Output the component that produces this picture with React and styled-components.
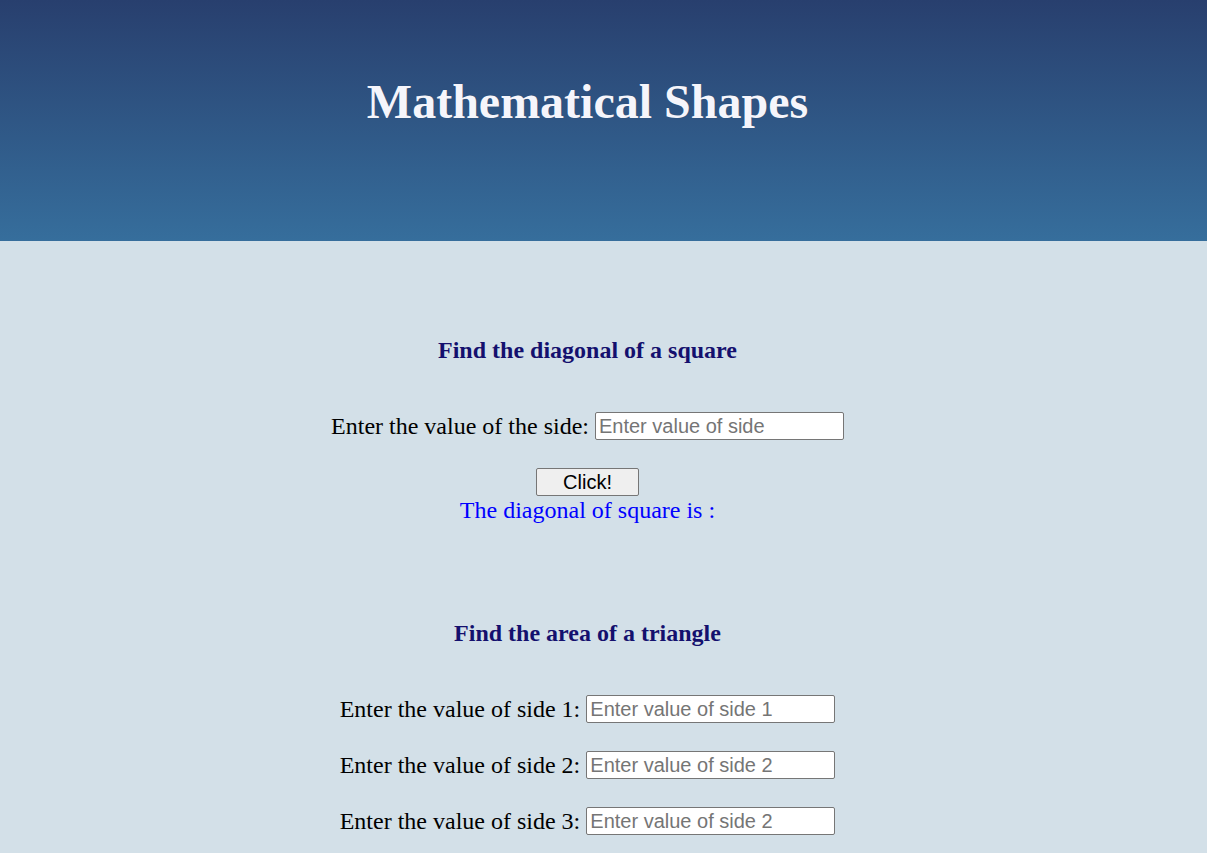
import React from "react";
import styled, { createGlobalStyle } from "styled-components";

const Global = createGlobalStyle`
  html, body { margin: 0; padding: 0; }
  body { background: #d3e0e8; font-family: "Liberation Serif", "Times New Roman", serif; }
`;

const Header = styled.header`
  height: 241px;
  background: linear-gradient(to bottom, #283f6e, #366e9c);
  display: flex;
  justify-content: center;
  align-items: flex-start;
  padding-right: 32px;
`;

const Title = styled.h1`
  margin: 0;
  padding-top: 74px;
  font-size: 48px;
  line-height: 56px;
  font-weight: bold;
  color: #f5f5fb;
  text-shadow: 0 0 1px rgba(0,0,0,0.2);
`;

const Main = styled.main`
  display: flex;
  flex-direction: column;
  align-items: center;
  padding-right: 32px;
`;

const Section = styled.section`
  display: flex;
  flex-direction: column;
  align-items: center;
  padding-top: ${p => p.$top}px;
`;

const Heading = styled.h3`
  margin: 0 0 ${p => p.$gap}px;
  font-size: 24px;
  line-height: 24px;
  font-weight: bold;
  color: #14106e;
`;

const Row = styled.div`
  display: flex;
  align-items: center;
  gap: 6px;
  height: 28px;
  margin-bottom: ${p => p.$gap}px;
  font-size: 24px;
  color: #000;
`;

const Input = styled.input`
  width: 249px;
  height: 28px;
  box-sizing: border-box;
  border: 1px solid #767676;
  border-radius: 2px;
  padding: 0 3px;
  font-family: "Liberation Sans", Arial, sans-serif;
  font-size: 20px;
  background: #fff;
  &::placeholder { color: #757575; }
`;

const Button = styled.button`
  width: 103px;
  height: 28px;
  box-sizing: border-box;
  border: 1px solid #767676;
  border-radius: 2px;
  background: #efefef;
  font-family: "Liberation Sans", Arial, sans-serif;
  font-size: 20px;
  color: #000;
  padding: 0;
`;

const Result = styled.div`
  margin-top: 1px;
  font-size: 24px;
  line-height: 26px;
  color: #0000ff;
`;

export default function App() {
  return (
    <>
      <Global />
      <Header>
        <Title>Mathematical Shapes</Title>
      </Header>
      <Main>
        <Section $top={97}>
          <Heading $gap={50}>Find the diagonal of a square</Heading>
          <Row $gap={28}>
            <span>Enter the value of the side:</span>
            <Input placeholder="Enter value of side" />
          </Row>
          <Button>Click!</Button>
          <Result>The diagonal of square is :</Result>
        </Section>
        <Section $top={98}>
          <Heading $gap={50}>Find the area of a triangle</Heading>
          <Row $gap={28}>
            <span>Enter the value of side 1:</span>
            <Input placeholder="Enter value of side 1" />
          </Row>
          <Row $gap={28}>
            <span>Enter the value of side 2:</span>
            <Input placeholder="Enter value of side 2" />
          </Row>
          <Row $gap={28}>
            <span>Enter the value of side 3:</span>
            <Input placeholder="Enter value of side 2" />
          </Row>
        </Section>
      </Main>
    </>
  );
}
